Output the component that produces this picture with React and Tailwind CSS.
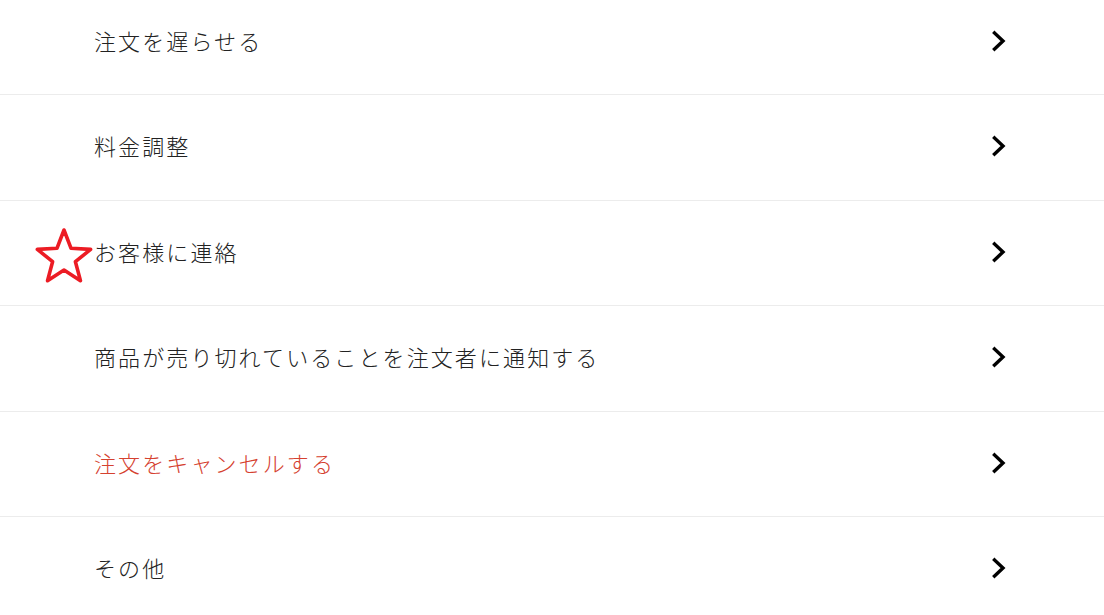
import React from "react";

const items = [
  { label: "注文を遅らせる" },
  { label: "料金調整" },
  { label: "お客様に連絡", star: true },
  { label: "商品が売り切れていることを注文者に通知する" },
  { label: "注文をキャンセルする", red: true },
  { label: "その他" },
];

function Chevron() {
  return (
    <svg width="16" height="22" viewBox="0 0 16 22" className="shrink-0">
      <path d="M3.5 3 L12 11 L3.5 19" fill="none" stroke="#000" strokeWidth="3.4" strokeLinecap="square" strokeLinejoin="miter" />
    </svg>
  );
}

function Star() {
  const pts = [];
  for (let i = 0; i < 10; i++) {
    const r = i % 2 === 0 ? 28 : 12;
    const a = -Math.PI / 2 + (i * Math.PI) / 5;
    pts.push(`${(30 + r * Math.cos(a)).toFixed(2)},${(30 + r * Math.sin(a)).toFixed(2)}`);
  }
  return (
    <svg width="60" height="60" viewBox="0 0 60 60" className="absolute left-[34px] top-1/2 -translate-y-[25px]">
      <polygon points={pts.join(" ")} fill="none" stroke="#ec1c24" strokeWidth="3.6" strokeLinejoin="round" />
    </svg>
  );
}

export default function App() {
  return (
    <div className="w-[1104px] h-[615px] overflow-hidden bg-white" style={{ fontFamily: '"Noto Sans CJK JP", "Noto Sans", sans-serif' }}>
      <div className="-mt-[10.5px] flex flex-col">
        {items.map((it, i) => (
          <div key={i} className="relative h-[105.5px] shrink-0 flex items-center justify-between pl-[94px] pr-[97px] border-b border-[#ececec]">
            {it.star && <Star />}
            <span className={`text-[22px] tracking-[2.1px] font-light leading-none -mt-[4px] ${it.red ? "text-[#d5412f]" : "text-[#222222]"}`}>
              {it.label}
            </span>
            <span className="-mt-[2px]">
              <Chevron />
            </span>
          </div>
        ))}
      </div>
    </div>
  );
}
